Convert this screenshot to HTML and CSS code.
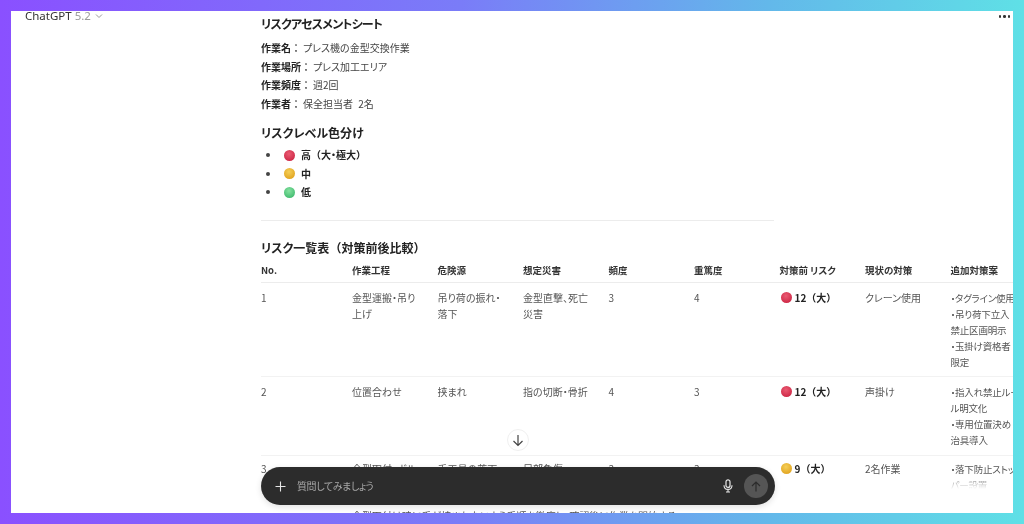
FILE: index.html
```html
<!DOCTYPE html>
<html lang="ja">
<head>
<meta charset="utf-8">
<title>ChatGPT</title>
<link rel="stylesheet" href="styles.css">
</head>
<body>
<div class="frame">
  <header class="topbar">
    <div class="brand">ChatGPT <span class="ver">5.2</span>
      <svg class="chev" width="8" height="6" viewBox="0 0 8 6"><path d="M1 1.5 4 4.5 7 1.5" fill="none" stroke="#9a9a9a" stroke-width="1"/></svg>
    </div>
    <div class="more"><i></i><i></i><i></i></div>
  </header>
  <main class="doc">
    <div class="narrow">
      <h2 class="h-first">リスクアセスメントシート</h2>
      <p><b>作業名</b><span class="colon">：</span>プレス機の金型交換作業</p>
      <p><b>作業場所</b><span class="colon">：</span>プレス加工エリア</p>
      <p><b>作業頻度</b><span class="colon">：</span>週2回</p>
      <p><b>作業者</b><span class="colon">：</span>保全担当者 2名</p>
      <h2 class="h-level">リスクレベル色分け</h2>
      <ul class="levels">
        <li><span class="dot red"></span><b>高<span class="fw">（</span>大・極大<span class="fw">）</span></b></li>
        <li><span class="dot yellow"></span><b>中</b></li>
        <li><span class="dot green"></span><b>低</b></li>
      </ul>
      <hr class="rule">
      <h2 class="h-table">リスク一覧表<span class="fw">（</span>対策前後比較<span class="fw">）</span></h2>
    </div>
    <table class="risk">
      <thead>
        <tr><th>No.</th><th>作業工程</th><th>危険源</th><th>想定災害</th><th>頻度</th><th>重篤度</th><th>対策前 リスク</th><th>現状の対策</th><th>追加対策案</th></tr>
      </thead>
      <tbody>
        <tr class="row1"><td>1</td><td>金型運搬・吊り上げ</td><td>吊り荷の振れ・落下</td><td>金型直撃、死亡災害</td><td>3</td><td>4</td><td class="rk"><span class="dot red"></span><b>12<span class="fw">（</span>大<span class="fw">）</span></b></td><td>クレーン使用</td><td class="lines">・タグライン使用<br>・吊り荷下立入<br>禁止区画明示<br>・玉掛け資格者<br>限定</td></tr>
        <tr><td>2</td><td>位置合わせ</td><td>挟まれ</td><td>指の切断・骨折</td><td>4</td><td>3</td><td class="rk"><span class="dot red"></span><b>12<span class="fw">（</span>大<span class="fw">）</span></b></td><td>声掛け</td><td class="lines">・指入れ禁止ルー<br>ル明文化<br>・専用位置決め<br>治具導入</td></tr>
        <tr class="row3"><td>3</td><td>金型取付・ボルト締め</td><td>手工具の落下</td><td>足部負傷</td><td>3</td><td>3</td><td class="rk"><span class="dot yellow"></span><b>9<span class="fw">（</span>大<span class="fw">）</span></b></td><td>2名作業</td><td class="lines">・落下防止ストッパー<br>パー設置</td></tr>
        <tr class="row4"><td></td><td colspan="8">金型取付け時に手が挟まれないよう手順を徹底し、確認後に作業を開始する</td></tr>
      </tbody>
    </table>
  </main>
  <div class="fade"></div>
  <button class="down" aria-label="下へスクロール">
    <svg width="12" height="13" viewBox="0 0 12 13"><path d="M6 1v10.5M1.5 7 6 11.5 10.5 7" fill="none" stroke="#444" stroke-width="1.2"/></svg>
  </button>
  <div class="composer">
    <svg class="plus" width="11" height="11" viewBox="0 0 11 11"><path d="M5.5 .5v10M.5 5.5h10" stroke="#e6e6e6" stroke-width="1.1"/></svg>
    <span class="ph">質問してみましょう</span>
    <svg class="mic" width="10" height="14" viewBox="0 0 10 14"><rect x="3" y=".8" width="4" height="7.6" rx="2" fill="none" stroke="#e8e8e8" stroke-width="1.2"/><path d="M1 6.2C1 9 2.8 10.4 5 10.4S9 9 9 6.2M5 10.4V13M3 13h4" fill="none" stroke="#e8e8e8" stroke-width="1.1"/></svg>
    <span class="send"><svg width="10" height="11" viewBox="0 0 10 11"><path d="M5 10.5V1M1 5 5 1l4 4" fill="none" stroke="#2c2c2c" stroke-width="1.2"/></svg></span>
  </div>
</div>
</body>
</html>
```
FILE: styles.css
```css
* { box-sizing: border-box; }
html, body { margin: 0; height: 100%; }
body {
  padding: 11px;
  background: linear-gradient(90deg, #8a50ff 0%, #7a7cf8 45%, #63b8ea 75%, #5fe0e6 100%);
  font-family: "Noto Sans CJK JP", "Noto Sans", sans-serif;
  font-feature-settings: "palt";
  overflow: hidden;
}
.frame {
  position: relative;
  height: 502px;
  background: #fff;
  overflow: hidden;
  color: #444;
  font-size: 10px;
  line-height: 18.5px;
  filter: blur(.3px);
}
.topbar {
  position: absolute;
  left: 0; right: 0; top: 0;
  display: flex;
  justify-content: space-between;
  padding: 0 3px 0 14px;
}
.brand { font-family: "Noto Sans", sans-serif; font-size: 11.5px; line-height: 12px; color: #333; white-space: nowrap; margin-top: -1px; height: 14px; }
.ver { color: #9a9a9a; }
.chev { margin-left: 1px; vertical-align: 1px; }
.more { display: flex; gap: 2px; padding-top: 4px; height: 8px; }
.more i { width: 2.5px; height: 2.5px; border-radius: 50%; background: #333; }
.doc { padding: 4px 0 0 250px; }
.narrow { width: 513px; }
h2 { margin: 0; font-size: 12px; line-height: 18px; font-weight: 700; color: #222; }
.narrow p { margin: 0; word-spacing: 3px; }
.narrow b, .risk b { color: #222; font-weight: 700; }
.fw { font-feature-settings: normal; }
.colon { font-family: "Noto Sans CJK TC", sans-serif; font-feature-settings: normal; font-weight: 700; color: #555; margin-right: 2px; }
.h-first { margin-bottom: 6px; letter-spacing: -.8px; }
.h-level { margin: 11px 0 3px; }
.levels { margin: 0; padding: 0 0 0 20px; }
.levels li { height: 18.5px; line-height: 19px; }
.dot {
  display: inline-block;
  width: 11px; height: 11px;
  border-radius: 50%;
  margin: 0 6px 0 3px;
  vertical-align: -1.5px;
}
.red { background: radial-gradient(circle at 45% 35%, #ea5a72, #cf2a48 75%); }
.yellow { background: radial-gradient(circle at 45% 35%, #f5cf58, #e2a622 75%); }
.green { background: radial-gradient(circle at 45% 35%, #86e2a0, #45bd72 75%); }
.rule { border: 0; border-top: 1px solid #ececec; margin: 19px 0 18px; }
.h-table { margin-bottom: 2px; }
.risk { border-collapse: collapse; table-layout: fixed; width: 775px; }
.risk th:first-child { width: 91px; }
.risk th { text-align: left; font-weight: 700; color: #333; font-size: 9.5px; line-height: 16px; padding: 3px 8px 4px 0; border-bottom: 1px solid #ececec; }
.risk td { vertical-align: top; font-size: 10px; line-height: 16px; padding: 7px 20px 7px 0; border-bottom: 1px solid #f2f2f2; color: #555; }
.rk { white-space: nowrap; }
.risk .lines { white-space: nowrap; font-size: 9.5px; letter-spacing: -.2px; }
.rk .dot { margin: 0 3px 0 1px; }
.row1 td { padding-bottom: 6px; }
.row3 td { padding-top: 5px; padding-bottom: 11px; }
.row4 td { padding-top: 3px; white-space: nowrap; }
.fade {
  position: absolute;
  left: 0; right: 0; top: 462px; height: 36px;
  background: linear-gradient(180deg, rgba(255,255,255,0), #fff 16px);
}
.down {
  position: absolute;
  left: 496px; top: 418px;
  width: 22px; height: 22px;
  padding: 0;
  display: flex; align-items: center; justify-content: center;
  background: #fff;
  border: 1px solid #f0f0f0;
  border-radius: 50%;
}
.composer {
  position: absolute;
  left: 250px; top: 456px;
  width: 514px; height: 38px;
  display: flex;
  align-items: center;
  padding: 0 7px 0 14px;
  background: #2c2c2c;
  border-radius: 19px;
  box-shadow: 0 2px 6px rgba(0,0,0,.12);
}
.ph { margin-left: 11px; flex: 1; color: #a8a8a8; font-size: 10px; letter-spacing: -.4px; }
.mic { margin-right: 11px; }
.send { width: 24px; height: 24px; border-radius: 50%; background: #555; display: flex; align-items: center; justify-content: center; }
```
